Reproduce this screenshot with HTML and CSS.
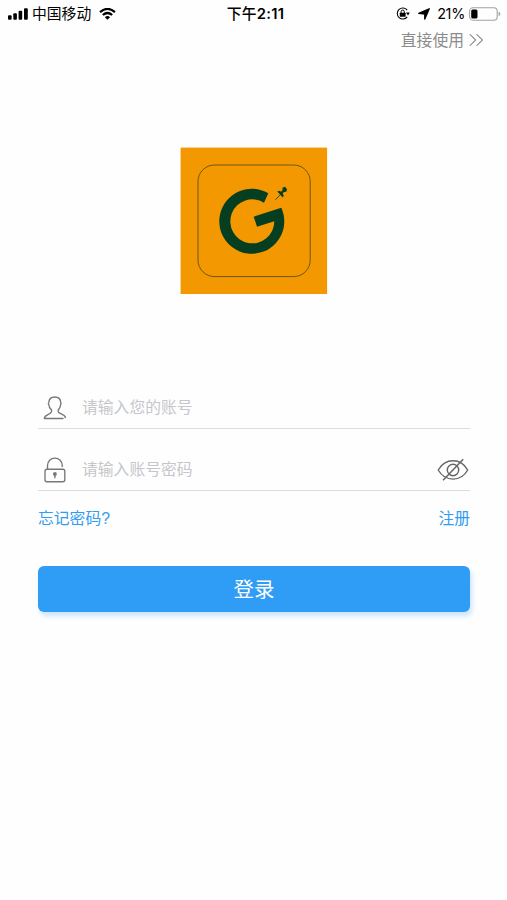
FILE: index.html
```
<!DOCTYPE html>
<html lang="zh-CN">
<head>
<meta charset="utf-8">
<meta name="viewport" content="width=device-width, initial-scale=1">
<title>登录</title>
<link rel="stylesheet" href="styles.css">
</head>
<body>
<header class="status">
  <div class="status-left">
    <svg class="signal" viewBox="0 0 20 12"><rect x="0" y="7.2" width="3.6" height="4.5" rx="1"/><rect x="5.3" y="5.2" width="3.6" height="6.5" rx="1"/><rect x="10.6" y="2.7" width="3.6" height="9" rx="1"/><rect x="16" y="0.2" width="3.8" height="11.5" rx="1"/></svg>
    <span class="carrier">中国移动</span>
    <svg class="wifi" viewBox="0 0 17 12"><path d="M1 4.1Q8.5-2.3 16 4.1M3.8 7Q8.5 3 13.2 7" fill="none" stroke="#000" stroke-width="2.2"/><path d="M5.9 9.2Q8.5 7 11.1 9.2L8.5 11.8Z"/></svg>
  </div>
  <div class="time"><span class="period">下午</span>2:11</div>
  <div class="status-right">
    <svg class="lock-rot" viewBox="0 0 14 13"><path d="M11.2 3.2A5.5 5.5 0 1 0 11.2 9.8" fill="none" stroke="#000" stroke-width="1.1"/><path d="M10 5.5H13.8L12 8.4Z"/><rect x="3.8" y="5.7" width="5.8" height="4" rx=".5"/><path d="M5.1 6V4.7a1.6 1.6 0 0 1 3.2 0V6" fill="none" stroke="#000" stroke-width="1"/></svg>
    <svg class="arrow" viewBox="0 0 12 12"><path d="M11.2.8 6.8 11V6L.8 5.4Z" stroke="#000" stroke-width="1.4" stroke-linejoin="round"/></svg>
    <span class="percent">21%</span>
    <svg class="battery" viewBox="0 0 32 14"><rect x=".6" y=".8" width="27.6" height="12.4" rx="3.4" fill="none" stroke="#a3a3a3" stroke-width="1.1"/><rect x="2.2" y="2.4" width="6.3" height="9.2" rx="1.5"/><path d="M29.6 4.8Q31.4 5.4 31.4 7T29.6 9.2Z" fill="#a3a3a3"/></svg>
  </div>
</header>
<nav class="skip">
  <a class="skip-link">直接使用<svg viewBox="0 0 14 12"><path d="m.7.2 6 5.8-6 5.8M7.5.2l6 5.8-6 5.8" fill="none" stroke="#8c8c8c" stroke-width="1.1"/></svg></a>
</nav>
<main class="login">
  <svg class="logo" viewBox="180 147 148 148">
    <rect x="180.6" y="147.6" width="146.5" height="146.4" fill="#f39800"/>
    <rect x="198" y="165" width="112.2" height="111.6" rx="16.5" fill="none" stroke="#685a10" stroke-width="1"/>
    <path d="M268.3 193.3A32.5 32.5 0 1 0 281.3 207.7L253.7 216.7 257 226.7 274.3 221.3A22 22 0 1 1 264 202.7Z" fill="#063e22"/>
    <path d="m277.2 191.6 2.2-.8 1.7 1 1.5-2-.1-2 2.6-1 2 2.8-.9 2.2-2.3.2-1.3 1.7 1.2 1.7-1 2Z" fill="#063e22"/>
    <path d="m280.5 194.5-5 5.2" stroke="#063e22" stroke-width=".8"/>
  </svg>
  <form class="form">
    <label class="field">
      <svg class="user" viewBox="0 0 24 24"><path d="M8.5 15.6V13.9C6.4 12.4 5.9 10.3 5.8 8.5 5.2 8 5.5 6.8 5.8 6.4 6 2.7 8.2 1 11.7 1s5.9 1.7 6 5.4c.4.4.5 1.6-.1 2.1-.1 1.8-.6 3.9-2.4 5.4v1.7c.4 2.5 6.9 2.1 7.2 6M8.5 15.6C8 18.8 1.6 17.8 1.3 22.5H20" fill="none" stroke="#777" stroke-width="1.35" stroke-linecap="round" stroke-linejoin="round"/></svg>
      <input type="text" placeholder="请输入您的账号">
    </label>
    <label class="field">
      <svg class="padlock" viewBox="0 0 22 26"><rect x="1" y="12.2" width="19.8" height="12.5" rx="2" fill="none" stroke="#777" stroke-width="1.35"/><path d="M3.5 12V8.5a7.4 7.4 0 0 1 14.8 0V10" fill="none" stroke="#777" stroke-width="1.35"/><circle cx="10.9" cy="17" r="1.9" fill="#777"/><path d="M10.9 17v4.2" stroke="#777" stroke-width="1.4"/></svg>
      <input type="text" placeholder="请输入账号密码">
      <svg class="eye" viewBox="0 0 32 24"><path d="M1.2 12C5 5.4 10 2.8 16 2.8S27 5.4 30.7 12C27 18.4 22 21.1 16 21.1S5 18.4 1.2 12Z" fill="none" stroke="#666" stroke-width="1.4" stroke-linejoin="round"/><circle cx="16" cy="12" r="5.7" fill="none" stroke="#666" stroke-width="1.4"/><path d="M6.1 22.3 26.2 1.3" stroke="#666" stroke-width="1.5"/></svg>
    </label>
    <div class="links"><a>忘记密码?</a><a>注册</a></div>
    <button class="submit" type="button">登录</button>
  </form>
</main>
</body>
</html>
```
FILE: styles.css
```
* { box-sizing: border-box; }
body {
  margin: 0;
  min-height: 900px;
  background: #fefefe;
  font-family: "Liberation Sans", "Noto Sans CJK SC", sans-serif;
  color: #000;
}
svg { display: block; flex: none; }
.status {
  display: grid;
  grid-template-columns: 1fr auto 1fr;
  align-items: center;
  height: 27px;
  padding: 0 6px 0 8px;
  font: 15px/20px Inter, "Noto Sans CJK SC", sans-serif;
}
.status-left, .status-right { display: flex; align-items: center; }
.status-right { justify-content: flex-end; }
.signal { width: 20px; height: 12px; }
.carrier { margin-left: 4px; font-size: 14.8px; }
.wifi { width: 17px; height: 12px; margin-left: 8px; }
.time { padding-left: 2px; font-size: 14.8px; font-weight: 600; letter-spacing: .2px; }
.period { font-weight: 500; }
.lock-rot { width: 14px; height: 13px; }
.arrow { width: 12px; height: 12px; margin-left: 8px; }
.percent { margin: 0 4px 0 7px; font-size: 14.4px; letter-spacing: -.3px; }
.battery { width: 32px; height: 14px; }
.skip { display: flex; justify-content: flex-end; height: 28px; padding-right: 24px; }
.skip-link {
  display: flex;
  align-items: center;
  gap: 5px;
  font-size: 15.8px;
  line-height: 30px;
  color: #8c8c8c;
}
.skip-link svg { width: 14px; height: 12px; margin-bottom: 2px; }
.login { padding: 92px 37px 0 38px; }
.logo { width: 148px; height: 148px; margin: 0 auto; }
.form { margin-top: 72px; }
.field {
  display: flex;
  align-items: center;
  height: 62px;
  padding: 20px 1px 0 5px;
  border-bottom: 1px solid #dcdcdc;
}
.field input {
  flex: 1;
  min-width: 0;
  height: 30px;
  padding: 0;
  border: 0;
  outline: 0;
  background: none;
  font: inherit;
  font-size: 15.8px;
}
.field input::placeholder { color: #c6c6ca; opacity: 1; }
.user { width: 24px; height: 24px; margin-right: 15px; }
.padlock { width: 22px; height: 26px; margin: 0 16px 0 1px; }
.eye { width: 32px; height: 24px; }
.links {
  display: flex;
  justify-content: space-between;
  margin-top: 16px;
  font-size: 15.8px;
  line-height: 24px;
  color: #329cf0;
}
.submit {
  display: block;
  width: 100%;
  height: 46px;
  margin-top: 35px;
  padding: 0 0 2px;
  border: 0;
  border-radius: 6px;
  background: #2f9cf6;
  box-shadow: 2px 4px 5px rgba(47, 156, 246, .25);
  font: 20.5px/44px "Noto Sans CJK SC", sans-serif;
  color: #fff;
}
```
